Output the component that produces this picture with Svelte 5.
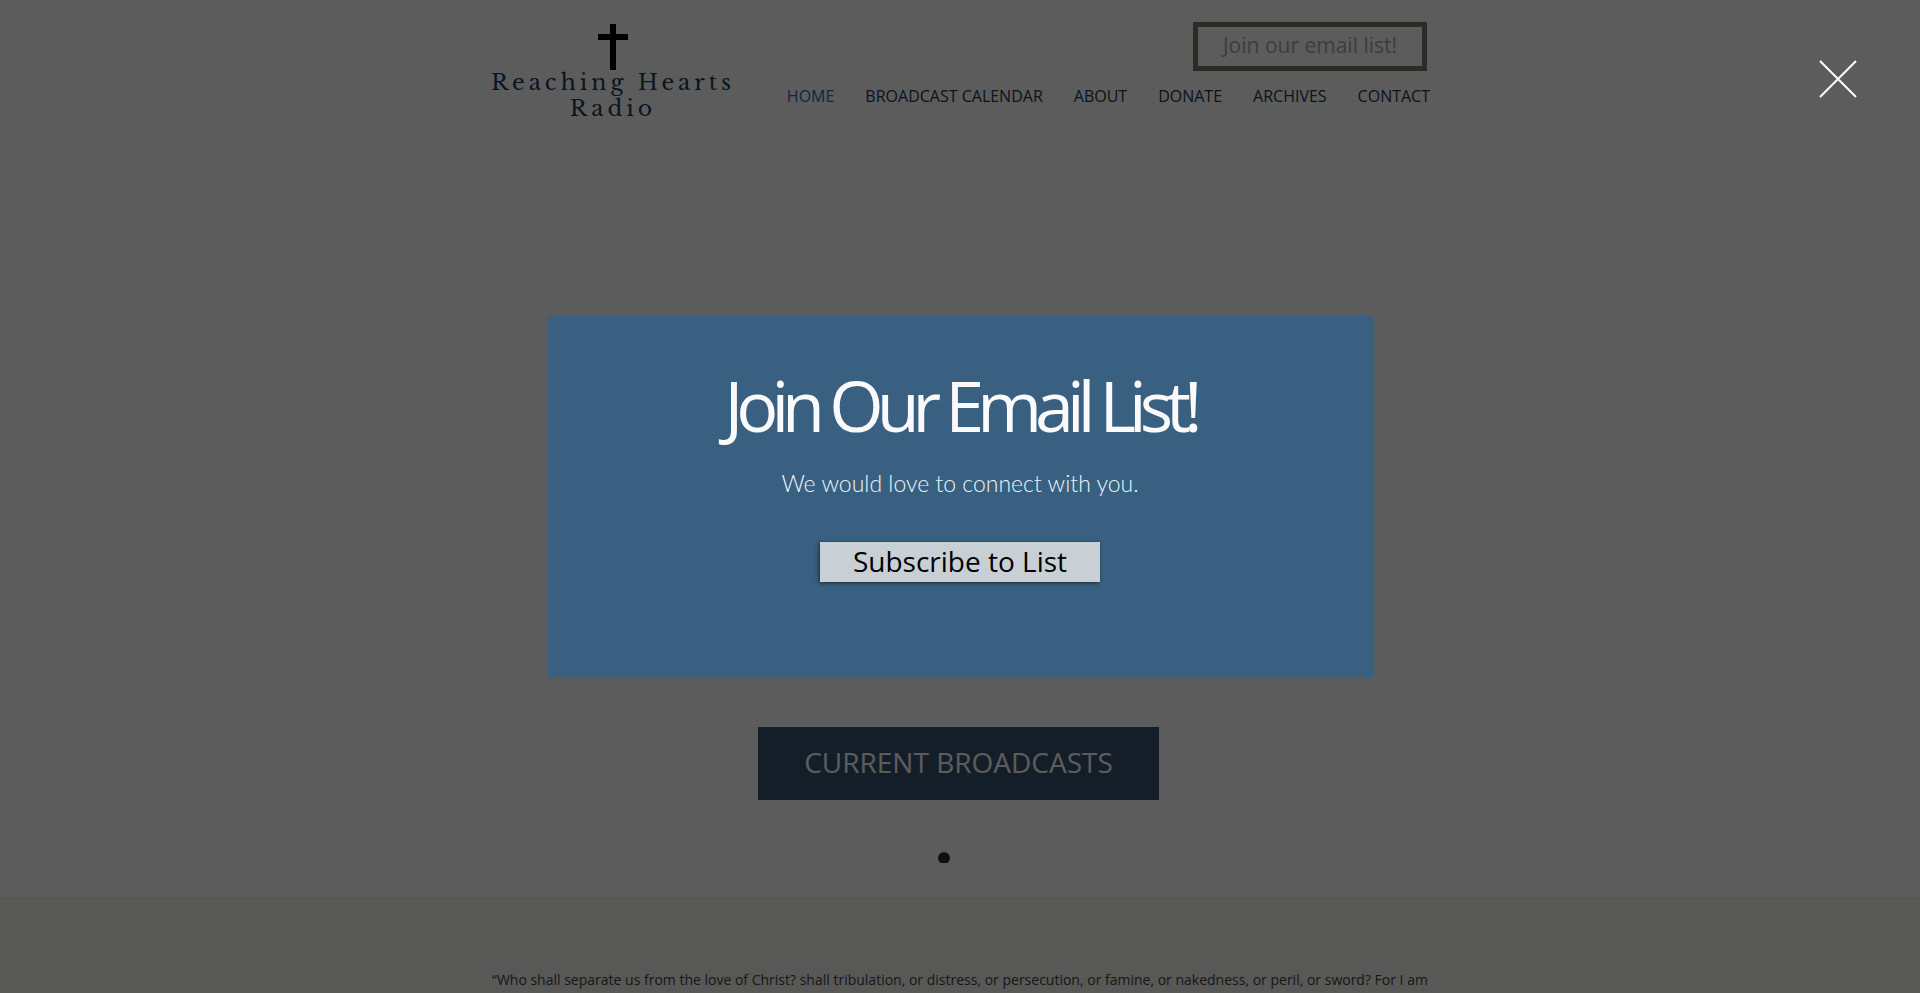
<script lang="ts">
	let open = $state(true);

	const links: [string, string][] = [
		['HOME', '#home'],
		['BROADCAST CALENDAR', '#calendar'],
		['ABOUT', '#about'],
		['DONATE', '#donate'],
		['ARCHIVES', '#archives'],
		['CONTACT', '#contact']
	];
	let current = $state('#home');
</script>

<svelte:window onkeydown={(e) => e.key === 'Escape' && (open = false)} />

<div class="page">
	<header class="wrap header">
		<a class="logo" href="#home">
			<svg width="30" height="46" viewBox="0 0 30 46" aria-hidden="true">
				<path d="M12 0h6v10h12v6H18v30h-6V16H0v-6h12z" />
			</svg>
			<span>Reaching Hearts Radio</span>
		</a>
		<div class="side">
			<button type="button" class="join" onclick={() => (open = true)}>Join our email list!</button>
			<nav>
				{#each links as [label, href] (href)}
					<a {href} class:active={current === href} onclick={() => (current = href)}>{label}</a>
				{/each}
			</nav>
		</div>
	</header>

	<main class="hero">
		<a class="broadcasts" href="#archives">CURRENT BROADCASTS</a>
		<div class="dots"><span class="dot"></span></div>
	</main>

	<section class="verse">
		<p class="wrap">
			“Who shall separate us from the love of Christ? shall tribulation, or distress, or persecution, or
			famine, or nakedness, or peril, or sword? For I am
		</p>
	</section>
</div>

{#if open}
	<div class="overlay">
		<button type="button" class="close" aria-label="Close" onclick={() => (open = false)}>
			<svg width="38" height="38" viewBox="0 0 38 38" aria-hidden="true">
				<path d="M1 1l36 36M37 1L1 37" stroke="#fff" stroke-width="2" />
			</svg>
		</button>
		<div class="modal" role="dialog" aria-modal="true" aria-labelledby="modal-title">
			<h2 id="modal-title">Join Our Email List!</h2>
			<p>We would love to connect with you.</p>
			<button type="button" class="subscribe">Subscribe to List</button>
		</div>
	</div>
{/if}

<style>
	:global(body) {
		margin: 0;
		background: #fff;
		font-family: 'Open Sans', sans-serif;
	}

	.page {
		min-height: 100vh;
		display: flex;
		flex-direction: column;
	}

	.wrap {
		width: 100%;
		max-width: 980px;
		margin: 0 auto;
		box-sizing: border-box;
	}

	.header {
		display: flex;
		justify-content: space-between;
		padding: 22px 20px 0 15px;
	}

	.logo {
		width: 256px;
		padding-top: 2px;
		display: flex;
		flex-direction: column;
		align-items: center;
		text-align: center;
		text-decoration: none;
		font-family: 'Libre Baskerville', 'Liberation Serif', serif;
		font-size: 22px;
		line-height: 26px;
		letter-spacing: 4px;
		color: #1e3a58;
	}

	.side {
		display: flex;
		flex-direction: column;
		align-items: flex-end;
		gap: 13px;
	}

	.join {
		width: 234px;
		height: 49px;
		margin-right: 3px;
		padding: 0 0 4px;
		border: 5px solid #81796b;
		background: transparent;
		font: 21px/28px 'Open Sans', sans-serif;
		color: #aaa;
		cursor: pointer;
	}

	nav {
		display: flex;
		gap: 31px;
	}

	nav a {
		font-size: 16px;
		line-height: 24px;
		color: #21384e;
		text-decoration: none;
	}

	nav a.active,
	nav a:hover {
		color: #2d6da8;
	}

	.hero {
		display: flex;
		flex-direction: column;
		align-items: center;
		padding: 605px 3px 34px 0;
	}

	.broadcasts {
		width: 401px;
		box-sizing: border-box;
		padding: 15px 0 18px;
		background: #37536f;
		color: #fff;
		font-size: 28px;
		line-height: 40px;
		text-align: center;
		text-decoration: none;
	}

	.dots {
		height: 11px;
		margin-top: 52px;
		padding-right: 29px;
		overflow: hidden;
	}

	.dot {
		display: block;
		width: 12px;
		height: 12px;
		border-radius: 50%;
		background: #2f2f2f;
	}

	.verse {
		flex: 1;
		padding-top: 70px;
		background: #f4f4ee;
	}

	.verse p {
		padding: 0 22px;
		font-size: 14px;
		line-height: 26px;
		color: #444;
	}

	.overlay {
		position: fixed;
		inset: 0;
		display: flex;
		align-items: center;
		justify-content: center;
		background: rgba(0, 0, 0, 0.64);
	}

	.close {
		position: absolute;
		top: 60px;
		right: 63px;
		padding: 0;
		border: none;
		background: none;
		line-height: 0;
		cursor: pointer;
	}

	.modal {
		width: 825px;
		max-width: 100%;
		box-sizing: border-box;
		padding: 39px 20px 96px;
		display: flex;
		flex-direction: column;
		align-items: center;
		background: #396080;
		text-align: center;
	}

	.modal h2 {
		margin: 0;
		font-size: 70px;
		font-weight: 400;
		line-height: 100px;
		letter-spacing: -7px;
		color: #fafafc;
	}

	.modal p {
		margin: 11px 0 41px;
		font-family: Futura, Lato, sans-serif;
		font-weight: 300;
		font-size: 23px;
		line-height: 35px;
		color: #e8f6fc;
	}

	.subscribe {
		width: 280px;
		height: 40px;
		padding: 0 0 2px;
		border: none;
		background: #c8d0d6;
		box-shadow: -1px 1px 4px rgba(0, 0, 0, 0.6);
		font: 28px/38px 'Open Sans', sans-serif;
		color: #000;
		cursor: pointer;
	}
</style>
